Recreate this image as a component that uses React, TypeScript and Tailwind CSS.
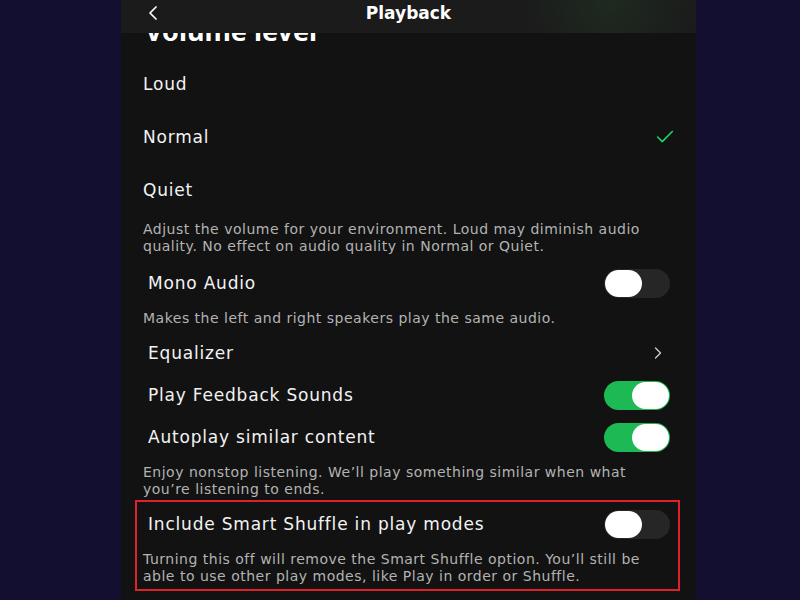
import { ChevronLeft, ChevronRight, Check } from "lucide-react";

const font = { fontFamily: '"DejaVu Sans", "Noto Sans", sans-serif' };

const Toggle = ({ on }: { on: boolean }) => (
  <div
    className={`flex h-[29px] w-[66px] items-center rounded-full px-[1px] ${
      on ? "justify-end bg-[#1db954]" : "justify-start bg-[#262626]"
    }`}
  >
    <div className="h-[27px] w-[37px] rounded-full bg-white" />
  </div>
);

const Desc = ({ children, className = "" }: { children: React.ReactNode; className?: string }) => (
  <p className={`pl-[22px] pr-[36px] text-[14px] leading-[17px] tracking-[0.5px] text-[#b3b3b3] ${className}`}>
    {children}
  </p>
);

const Row = ({ label, right }: { label: string; right: React.ReactNode }) => (
  <div className="flex h-[42px] items-center justify-between pl-[27px] pr-[26px]">
    <span className="pt-[2px] text-[17px] tracking-[0.8px] text-[#f2f2f2]">{label}</span>
    {right}
  </div>
);

export default function App() {
  return (
    <div className="flex h-[600px] w-[800px] bg-[#120f30] pl-[121px]" style={font}>
      <div className="relative h-full w-[575px] overflow-hidden bg-[#121212]">
        <div className="absolute inset-x-0 top-0 z-10 flex h-[33px] items-center justify-center bg-[#1b1b1b] bg-[radial-gradient(circle_at_85%_0%,rgba(35,70,40,0.35),transparent_18%)] pb-[6px]">
          <ChevronLeft className="absolute left-[20px] top-[1px] h-[24px] w-[24px] text-white" strokeWidth={1.75} />
          <span className="text-[17px] font-bold text-white">Playback</span>
        </div>

        <div className="flex h-[57px] items-start pl-[24px] pt-[14px]">
          <h1 className="text-[27px] font-bold leading-[33px] text-white" style={{ fontFamily: '"Noto Sans", sans-serif' }}>
            Volume level
          </h1>
        </div>

        {["Loud", "Normal", "Quiet"].map((v) => (
          <div key={v} className="flex h-[53px] items-center justify-between pl-[22px] pr-[20px]">
            <span className="pt-[2px] text-[17px] tracking-[0.8px] text-[#f2f2f2]">{v}</span>
            {v === "Normal" && <Check className="h-[22px] w-[22px] text-[#1ed760]" strokeWidth={1.75} />}
          </div>
        ))}

        <Desc className="mt-[5px]">
          Adjust the volume for your environment. Loud may diminish audio quality. No effect on audio quality in
          Normal or Quiet.
        </Desc>

        <div className="mt-[7px]">
          <Row label="Mono Audio" right={<Toggle on={false} />} />
        </div>
        <Desc className="flex h-[28px] items-center">Makes the left and right speakers play the same audio.</Desc>

        <Row label="Equalizer" right={<ChevronRight className="mr-[2px] h-[20px] w-[20px] text-[#cfcfcf]" strokeWidth={1.5} />} />
        <Row label="Play Feedback Sounds" right={<Toggle on />} />
        <Row label="Autoplay similar content" right={<Toggle on />} />
        <Desc className="mt-[6px]">
          Enjoy nonstop listening. We’ll play something similar when what you’re listening to ends.
        </Desc>

        <div className="ml-[14px] mr-[16px] mt-[2px] border-2 border-[#e0202a] pb-[4px] pt-[1px]">
          <div className="flex h-[42px] items-center justify-between pl-[11px] pr-[8px]">
            <span className="pt-[2px] text-[17px] tracking-[0.8px] text-[#f2f2f2]">Include Smart Shuffle in play modes</span>
            <Toggle on={false} />
          </div>
          <p className="mt-[6px] pl-[6px] pr-[20px] text-[14px] leading-[17px] tracking-[0.5px] text-[#b3b3b3]">
            Turning this off will remove the Smart Shuffle option. You’ll still be able to use other play modes, like
            Play in order or Shuffle.
          </p>
        </div>
      </div>
    </div>
  );
}
